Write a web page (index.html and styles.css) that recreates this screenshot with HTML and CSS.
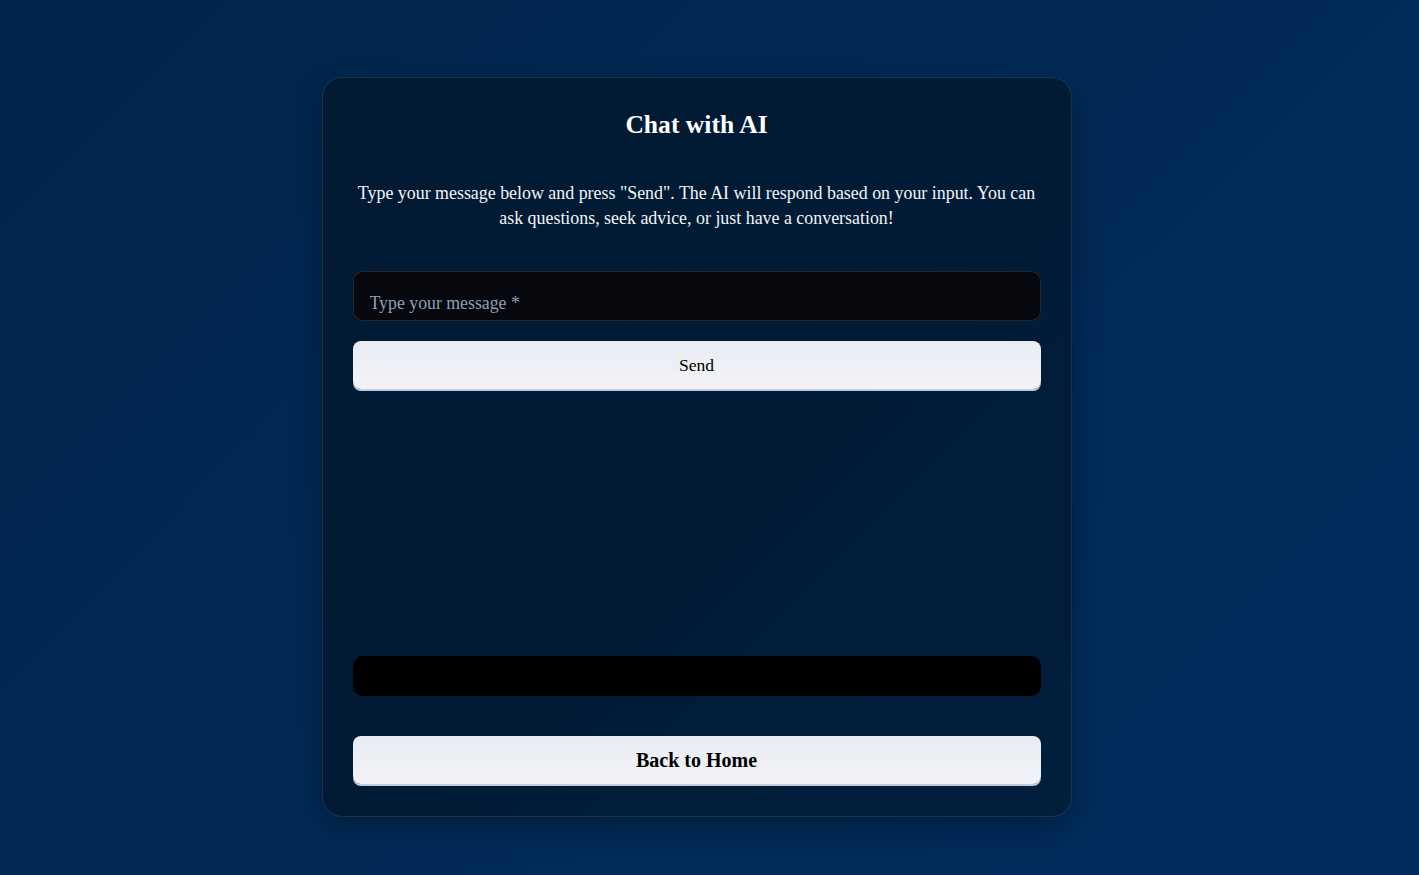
FILE: index.html
```html
<!DOCTYPE html>
<html lang="en">
<head>
<meta charset="utf-8">
<title>Chat with AI</title>
<link rel="stylesheet" href="styles.css">
</head>
<body>
<main class="page">
  <section class="card">
    <h1 class="title">Chat with AI</h1>
    <p class="intro">Type your message below and press "Send". The AI will respond based on your input. You can ask questions, seek advice, or just have a conversation!</p>
    <div class="field">
      <input class="message" type="text" placeholder="Type your message *">
    </div>
    <button class="btn send" type="button">Send</button>
    <div class="chat-area"></div>
    <div class="response"></div>
    <button class="btn home" type="button">Back to Home</button>
  </section>
</main>
</body>
</html>
```
FILE: styles.css
```css
html, body {
  margin: 0;
  padding: 0;
  height: 100%;
}
body {
  font-family: "Liberation Serif", "Times New Roman", serif;
  background: linear-gradient(135deg, #01254b 0%, #012a55 50%, #012d5e 100%);
  color: #ffffff;
}
.page {
  min-height: 875px;
  display: flex;
  justify-content: center;
  align-items: flex-start;
  padding: 77px 26px 0 0;
  box-sizing: border-box;
}
.card {
  width: 750px;
  box-sizing: border-box;
  padding: 30px 30px 32px;
  border: 1px solid rgba(255, 255, 255, 0.1);
  border-radius: 20px;
  background: linear-gradient(135deg, #021a32 0%, #011b36 50%, #011e3d 100%);
  box-shadow: 0 10px 30px rgba(0, 0, 0, 0.3);
  display: flex;
  flex-direction: column;
}
.title {
  margin: 0;
  font-size: 25.6px;
  line-height: 34px;
  font-weight: bold;
  text-align: center;
}
.intro {
  margin: 39px 0 0;
  font-size: 17.9px;
  line-height: 25px;
  text-align: center;
  color: #f2f5f9;
}
.field {
  margin-top: 40px;
}
.message {
  display: block;
  width: 100%;
  height: 50px;
  box-sizing: border-box;
  padding: 15px 16px 0;
  border: 1px solid rgba(255, 255, 255, 0.12);
  border-radius: 10px;
  background: #06080d;
  color: #ffffff;
  font-family: "Liberation Serif", "Times New Roman", serif;
  font-size: 17.8px;
  outline: none;
}
.message::placeholder {
  color: #8f9fb5;
}
.btn {
  display: block;
  width: 100%;
  height: 48px;
  border: none;
  border-radius: 8px;
  background: linear-gradient(180deg, #e9ecf3 0%, #f2f3f8 100%);
  box-shadow: 0 2px 0 #c2cbdc;
  color: #000000;
  font-family: "Liberation Serif", "Times New Roman", serif;
  cursor: pointer;
}
.send {
  margin-top: 20px;
  font-size: 17.6px;
}
.chat-area {
  height: 267px;
}
.response {
  height: 40px;
  border-radius: 10px;
  background: #000000;
}
.home {
  margin-top: 40px;
  font-size: 20px;
  font-weight: bold;
}
```
